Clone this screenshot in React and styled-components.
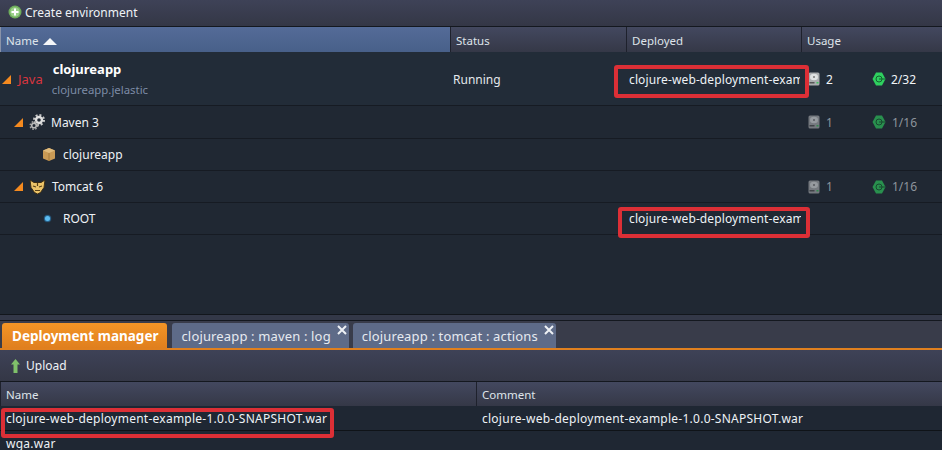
import React from "react";
import styled, { createGlobalStyle } from "styled-components";

const GlobalStyle = createGlobalStyle`
  html, body { margin: 0; padding: 0; background: #1f2732; }
  body { font-family: "Noto Sans", "DejaVu Sans", sans-serif; font-size: 12px; color: #eef2f6; }
`;

const Page = styled.div`
  position: relative;
  width: 942px;
  height: 450px;
  overflow: hidden;
  display: flex;
  flex-direction: column;
  background: #202833;
`;

const Toolbar = styled.div`
  height: ${({ $h }) => $h}px;
  flex: none;
  display: flex;
  align-items: center;
  gap: ${({ $gap }) => $gap}px;
  padding: 0 0 ${({ $lift = 0 }) => $lift}px ${({ $pad }) => $pad}px;
  background: linear-gradient(#3e4257, #343746);
  border-bottom: 1px solid #14181f;
  box-sizing: border-box;
`;

const HeaderRow = styled.div`
  height: ${({ $h }) => $h}px;
  flex: none;
  display: grid;
  grid-template-columns: ${({ $cols }) => $cols};
  background: linear-gradient(#43485f, #353847);
`;

const HeaderCell = styled.div`
  display: flex;
  align-items: center;
  gap: 5px;
  padding: 1px 0 0 5px;
  box-sizing: border-box;
  font-size: 11.5px;
  color: #dfe4ea;
  border-left: 1px solid ${({ $active }) => ($active ? "#8a93a8" : "#1e212c")};
  background: ${({ $active }) => ($active ? "linear-gradient(#546b98, #486089)" : "none")};
`;

const SortArrow = styled.span`
  width: 0;
  height: 0;
  margin-top: 2px;
  border-left: 7px solid transparent;
  border-right: 7px solid transparent;
  border-bottom: 7px solid #f4f6f8;
`;

const Row = styled.div`
  height: ${({ $h }) => $h}px;
  flex: none;
  box-sizing: border-box;
  display: grid;
  grid-template-columns: 450px 176px 182px 64px 70px;
  align-items: center;
  padding-top: ${({ $top }) => ($top ? 1 : 0)}px;
  background: ${({ $top }) => ($top ? "#222c38" : "#202833")};
  border-bottom: 1px solid #161b23;
`;

const NameCell = styled.div`
  display: flex;
  align-items: center;
  padding-left: ${({ $pad }) => $pad}px;
  gap: ${({ $gap = 6 }) => $gap}px;
  min-width: 0;
`;

const Expander = styled.span`
  width: 0;
  height: 0;
  flex: none;
  border-left: 9px solid transparent;
  border-bottom: 9px solid #f58a1f;
`;

const JavaLabel = styled.span`
  color: #d9353f;
  font-size: 13px;
  margin-right: 2px;
`;

const EnvName = styled.div`
  display: flex;
  flex-direction: column;
  gap: 5px;
  line-height: 15px;
`;

const EnvTitle = styled.strong`
  color: #fff;
  padding-left: 1px;
  font-weight: 700;
  font-size: 13px;
`;

const EnvDomain = styled.span`
  color: #7d8ba6;
  font-size: 11.4px;
`;

const StatusCell = styled.div`
  padding-left: 3px;
  color: #e4e8ec;
`;

const DeployedCell = styled.div`
  width: ${({ $w }) => $w}px;
  overflow: hidden;
  white-space: nowrap;
  box-sizing: border-box;
  padding-left: 3px;
  letter-spacing: 0.12px;
`;

const UsageCell = styled.div`
  display: flex;
  align-items: center;
  gap: ${({ $gap = 6 }) => $gap}px;
  color: ${({ $dim }) => ($dim ? "#8d949c" : "#f1f4f7")};
`;

const Gap = styled.div`
  height: 79px;
  flex: none;
`;

const Splitter = styled.div`
  height: 6px;
  flex: none;
  box-sizing: border-box;
  background: #333848;
  border-top: 1px solid #12161c;
`;

const TabStrip = styled.div`
  height: 30px;
  flex: none;
  box-sizing: border-box;
  display: flex;
  align-items: flex-end;
  padding-left: 2px;
  background: #393c4a;
  border-top: 1px solid #14181f;
  border-bottom: 2px solid #e0801f;
`;

const Tab = styled.div`
  position: relative;
  height: 25px;
  box-sizing: border-box;
  display: flex;
  align-items: center;
  margin-right: ${({ $mr = 4 }) => $mr}px;
  padding: 0 ${({ $pad }) => $pad}px 0 ${({ $left }) => $left}px;
  border-radius: 3px 3px 0 0;
  white-space: nowrap;
  color: ${({ $active }) => ($active ? "#fff" : "#e6eaf0")};
  font-weight: ${({ $active }) => ($active ? 700 : 400)};
  font-size: ${({ $active }) => ($active ? 13.5 : 13)}px;
  letter-spacing: ${({ $active }) => ($active ? 0 : 0.15)}px;
  background: ${({ $active }) =>
    $active ? "linear-gradient(#f39526, #e07f1e)" : "#5e6b88"};
`;

const TabClose = styled.span`
  position: absolute;
  top: 2px;
  right: 2px;
  width: 10px;
  height: 10px;
  display: flex;
`;

const FileGrid = styled.div`
  height: 25px;
  flex: none;
  box-sizing: border-box;
  display: flex;
  align-items: center;
  background: #1f2733;
  border-bottom: 1px solid #0f1318;
`;

const FileName = styled.div`
  width: ${({ $w }) => $w}px;
  flex: none;
  padding-left: ${({ $pad }) => $pad}px;
  white-space: nowrap;
  box-sizing: border-box;
  letter-spacing: 0.25px;
`;

const Highlight = styled.div`
  position: absolute;
  left: ${({ $x }) => $x}px;
  top: ${({ $y }) => $y}px;
  width: ${({ $w }) => $w}px;
  height: ${({ $h }) => $h}px;
  box-sizing: border-box;
  border: 4px solid #dc2f36;
  border-radius: 3px;
  pointer-events: none;
`;

const PlusIcon = () => (
  <svg width="14" height="14" viewBox="0 0 14 14">
    <circle cx="7" cy="7" r="6.500" fill="#6fae5c" />
    <circle cx="7" cy="7" r="4.800" fill="#9ad08a" />
    <path d="M7 3.500v7M3.500 7h7" stroke="#fff" strokeWidth="2" />
  </svg>
);

const GearIcon = () => (
  <svg width="16" height="16" viewBox="0 0 16 16">
    <circle cx="10" cy="6" r="5" fill="none" stroke="#c9c9c9" strokeWidth="2" strokeDasharray="2 1.900" />
    <circle cx="10" cy="6" r="3" fill="none" stroke="#dedede" strokeWidth="2.400" />
    <circle cx="5" cy="11.500" r="3.800" fill="none" stroke="#a4a4a4" strokeWidth="1.500" strokeDasharray="1.600 1.400" />
    <circle cx="5" cy="11.500" r="2.300" fill="none" stroke="#b8b8b8" strokeWidth="1.600" />
  </svg>
);

const BoxIcon = () => (
  <svg width="14" height="15" viewBox="0 0 14 15">
    <path d="M7 1l6 2.500v8L7 14l-6-2.500v-8z" fill="#c99a55" />
    <path d="M1 3.500L7 6l6-2.500L7 1z" fill="#e0bb7c" />
    <path d="M7 6v8" stroke="#a57a3c" strokeWidth="1" />
  </svg>
);

const TomcatIcon = () => (
  <svg width="17" height="16" viewBox="0 0 17 16">
    <path d="M1 1l4 2.500h7L16 1l-1 7.500-3.500 5-3 1.500-3-1.500-3.500-5z" fill="#edc468" stroke="#3d2e14" strokeWidth="1" />
    <path d="M4 7l3 1M13 7l-3 1M6 11.500h5M8.500 4v3" stroke="#5a4218" strokeWidth="1.200" />
  </svg>
);

const Dot = styled.span`
  width: 5px;
  height: 5px;
  flex: none;
  margin-right: 13px;
  border-radius: 50%;
  background: #5dbcf0;
  box-shadow: 0 0 1px 1px #2b6f9e;
`;

const DiskIcon = ({ dim }) => (
  <svg width="12" height="14" viewBox="0 0 12 14" opacity={dim ? 0.62 : 1}>
    <rect x="0.500" y="0.500" width="11" height="13" rx="1.500" fill="#a9acae" />
    <ellipse cx="6" cy="5" rx="4" ry="3.200" fill="#dfe1e2" />
    <circle cx="6" cy="5" r="1" fill="#777" />
    <rect x="1.500" y="10" width="5" height="1.500" fill="#555" />
    <rect x="8.500" y="10" width="2" height="1.500" fill="#3fc45f" />
  </svg>
);

const CloudletIcon = ({ dim }) => (
  <svg width="14" height="14" viewBox="0 0 14 14" opacity={dim ? 0.62 : 1}>
    <path d="M4 .5h6L13.500 7 10 13.500H4L.5 7z" fill="#2fd05f" />
    <circle cx="7" cy="7" r="3" fill="none" stroke="#13602f" strokeWidth="1" />
    <path d="M7 7h6" stroke="#13602f" strokeWidth="1" />
  </svg>
);

const UploadIcon = () => (
  <svg width="9" height="14" viewBox="0 0 9 14">
    <path d="M4.500 0L9 5.500H6.500V14h-4V5.500H0z" fill="#7fc06a" />
  </svg>
);

const CloseIcon = () => (
  <svg width="10" height="10" viewBox="0 0 10 10">
    <path d="M1 1l8 8M9 1L1 9" stroke="#eef1f5" strokeWidth="2" />
  </svg>
);

const DEPLOYED = "clojure-web-deployment-example-1.0.0-SNAPSHOT.war";

export default function App() {
  return (
    <Page>
      <GlobalStyle />
      <Toolbar $h={27} $gap={3} $pad={8} $lift={2}>
        <PlusIcon />
        <span>Create environment</span>
      </Toolbar>
      <HeaderRow $h={25} $cols="450px 176px 175px 141px">
        <HeaderCell $active>
          Name <SortArrow />
        </HeaderCell>
        <HeaderCell>Status</HeaderCell>
        <HeaderCell>Deployed</HeaderCell>
        <HeaderCell>Usage</HeaderCell>
      </HeaderRow>

      <Row $h={54} $top>
        <NameCell $pad={2} $gap={7}>
          <Expander />
          <JavaLabel>Java</JavaLabel>
          <EnvName>
            <EnvTitle>clojureapp</EnvTitle>
            <EnvDomain>clojureapp.jelastic</EnvDomain>
          </EnvName>
        </NameCell>
        <StatusCell>Running</StatusCell>
        <DeployedCell $w={174}>{DEPLOYED}</DeployedCell>
        <UsageCell>
          <DiskIcon />2
        </UsageCell>
        <UsageCell $gap={5}>
          <CloudletIcon />2/32
        </UsageCell>
      </Row>
      <Row $h={33}>
        <NameCell $pad={14} $gap={6}>
          <Expander />
          <GearIcon />
          <span>Maven 3</span>
        </NameCell>
        <span />
        <span />
        <UsageCell $dim>
          <DiskIcon dim />1
        </UsageCell>
        <UsageCell $dim $gap={6}>
          <CloudletIcon dim />1/16
        </UsageCell>
      </Row>
      <Row $h={32}>
        <NameCell $pad={42} $gap={7}>
          <BoxIcon />
          <span>clojureapp</span>
        </NameCell>
      </Row>
      <Row $h={32}>
        <NameCell $pad={14} $gap={6}>
          <Expander />
          <TomcatIcon />
          <span>Tomcat 6</span>
        </NameCell>
        <span />
        <span />
        <UsageCell $dim>
          <DiskIcon dim />1
        </UsageCell>
        <UsageCell $dim $gap={6}>
          <CloudletIcon dim />1/16
        </UsageCell>
      </Row>
      <Row $h={32}>
        <NameCell $pad={45} $gap={0}>
          <Dot />
          <span>ROOT</span>
        </NameCell>
        <span />
        <DeployedCell $w={175}>{DEPLOYED}</DeployedCell>
      </Row>

      <Gap />
      <Splitter />

      <TabStrip>
        <Tab $active $left={10} $pad={9} $mr={5}>
          Deployment manager
        </Tab>
        <Tab $left={9} $pad={18}>
          clojureapp : maven : log
          <TabClose>
            <CloseIcon />
          </TabClose>
        </Tab>
        <Tab $left={9} $pad={18}>
          clojureapp : tomcat : actions
          <TabClose>
            <CloseIcon />
          </TabClose>
        </Tab>
      </TabStrip>
      <Toolbar $h={32} $gap={6} $pad={11}>
        <UploadIcon />
        <span>Upload</span>
      </Toolbar>
      <HeaderRow $h={24} $cols="476px 466px">
        <HeaderCell>Name</HeaderCell>
        <HeaderCell>Comment</HeaderCell>
      </HeaderRow>
      <FileGrid>
        <FileName $w={476} $pad={6}>{DEPLOYED}</FileName>
        <FileName $w={466} $pad={6}>{DEPLOYED}</FileName>
      </FileGrid>
      <FileGrid>
        <FileName $w={476} $pad={6}>wga.war</FileName>
      </FileGrid>

      <Highlight $x={614} $y={65} $w={195} $h={33} />
      <Highlight $x={618} $y={207} $w={192} $h={31} />
      <Highlight $x={1} $y={408} $w={333} $h={30} />
    </Page>
  );
}
